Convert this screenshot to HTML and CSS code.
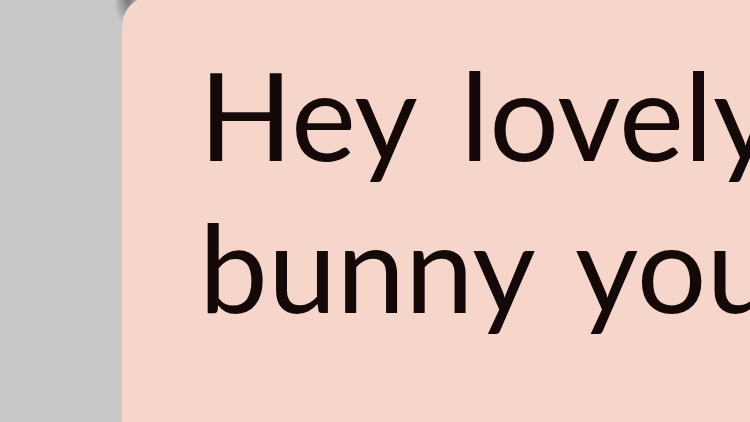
FILE: index.html
```html
<!DOCTYPE html>
<html>
<head>
<meta charset="utf-8">
<link rel="stylesheet" href="styles.css">
</head>
<body>
<div class="screen">
  <div class="bubble">
    <p class="msg">Hey lovely<br>bunny you</p>
  </div>
</div>
</body>
</html>
```
FILE: styles.css
```css
html, body {
  margin: 0;
  padding: 0;
  width: 750px;
  height: 422px;
  overflow: hidden;
}
.screen {
  width: 750px;
  height: 422px;
  display: flex;
  background: #c8c8c8;
  background-image: radial-gradient(ellipse 14px 26px at 128px 0px, #777777 0%, #a0a0a0 50%, rgba(200,200,200,0) 100%);
  overflow: hidden;
}
.bubble {
  margin-left: 122px;
  margin-top: -4px;
  flex: 1;
  height: 440px;
  background: #f6d5cb;
  border-top-left-radius: 30px;
}
.msg {
  margin: 0;
  padding: 42px 0 0 77px;
  font-family: "Lato", sans-serif;
  font-size: 123px;
  line-height: 152px;
  color: #150808;
  white-space: nowrap;
  letter-spacing: 0;
  word-spacing: 14px;
}
```
